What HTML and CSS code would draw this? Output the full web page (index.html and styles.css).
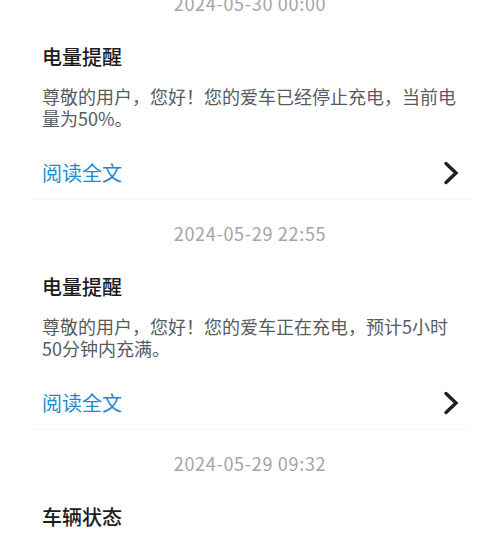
FILE: index.html
```html
<!DOCTYPE html>
<html lang="zh-CN">
<head>
    <meta charset="UTF-8">
    <meta name="viewport" content="width=device-width, initial-scale=1.0">
    <title>消息通知</title>
    <link rel="stylesheet" href="styles.css">
</head>
<body>
    <div class="message-list">
        <div class="message">
            <div class="time">2024-05-30 00:00</div>
            <div class="card">
                <div class="title">电量提醒</div>
                <div class="content">尊敬的用户，您好！您的爱车已经停止充电，当前电量为50%。</div>
                <div class="more">
                    <span class="more-text">阅读全文</span>
                    <svg class="arrow" width="16" height="24" viewBox="0 0 16 24">
                        <polyline points="3,2.5 13,12 3,21.5" fill="none" stroke="#1f1f1f" stroke-width="3.4" stroke-linecap="round" stroke-linejoin="miter"/>
                    </svg>
                </div>
            </div>
        </div>

        <div class="message">
            <div class="time">2024-05-29 22:55</div>
            <div class="card">
                <div class="title">电量提醒</div>
                <div class="content">尊敬的用户，您好！您的爱车正在充电，预计5小时50分钟内充满。</div>
                <div class="more">
                    <span class="more-text">阅读全文</span>
                    <svg class="arrow" width="16" height="24" viewBox="0 0 16 24">
                        <polyline points="3,2.5 13,12 3,21.5" fill="none" stroke="#1f1f1f" stroke-width="3.4" stroke-linecap="round" stroke-linejoin="miter"/>
                    </svg>
                </div>
            </div>
        </div>

        <div class="message">
            <div class="time">2024-05-29 09:32</div>
            <div class="card">
                <div class="title">车辆状态</div>
            </div>
        </div>
    </div>
</body>
</html>
```

FILE: styles.css
```css
body {
    margin: 0;
    background-color: #fff;
    font-family: "Noto Sans CJK SC", "Noto Sans", sans-serif;
    overflow: hidden;
}

.message-list {
    margin-top: -9px;
}

.message {
    margin-bottom: 21px;
}

.time {
    text-align: center;
    font-size: 18px;
    line-height: 24px;
    color: #a2a5a9;
    letter-spacing: 0.7px;
}

.card {
    margin: 0 30px;
    padding: 28px 12px 12px;
    border-bottom: 1px solid #f6f6f6;
}

.title {
    font-size: 20px;
    font-weight: 500;
    line-height: 28px;
    color: #1c1c1c;
}

.content {
    margin-top: 14px;
    font-size: 18px;
    line-height: 22px;
    color: #575b60;
}

.more {
    display: flex;
    justify-content: space-between;
    align-items: center;
    height: 28px;
    margin-top: 30px;
}

.more-text {
    font-size: 20px;
    line-height: 28px;
    color: #1e8bd0;
}

.arrow {
    display: block;
    margin-right: -1px;
}
```
